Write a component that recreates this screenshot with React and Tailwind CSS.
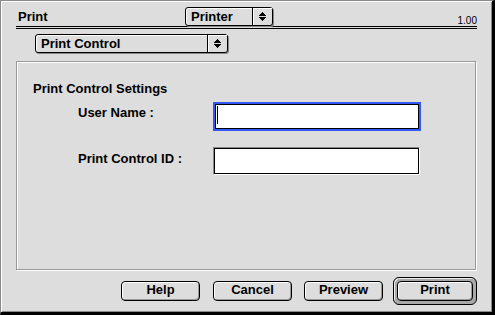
import React from "react";

const Arrows = () => (
  <svg width="7" height="9" viewBox="0 0 7 9" shapeRendering="crispEdges">
    <rect x="3" y="0" width="1" height="1" fill="#000" />
    <rect x="2" y="1" width="3" height="1" fill="#000" />
    <rect x="1" y="2" width="5" height="1" fill="#000" />
    <rect x="0" y="3" width="7" height="1" fill="#000" />
    <rect x="0" y="5" width="7" height="1" fill="#000" />
    <rect x="1" y="6" width="5" height="1" fill="#000" />
    <rect x="2" y="7" width="3" height="1" fill="#000" />
    <rect x="3" y="8" width="1" height="1" fill="#000" />
  </svg>
);

function Popup({ label, className }) {
  return (
    <div
      className={
        "flex h-[19px] rounded-[3px] border border-black bg-[#dddddd] shadow-[inset_1px_1px_0_#fff,1px_1px_0_#888] " +
        className
      }
    >
      <div className="flex-1 pl-[5px] text-[13px] font-bold leading-[17px]">{label}</div>
      <div className="flex w-[20px] items-center justify-center border-l border-black shadow-[inset_1px_1px_0_#fff]">
        <Arrows />
      </div>
    </div>
  );
}

function Button({ label, className = "" }) {
  return (
    <div
      className={
        "flex h-[20px] justify-center rounded-[4px] border border-black bg-[#dddddd] text-[13px] font-bold leading-[16px] shadow-[inset_1px_1px_0_#fff,inset_-1px_-1px_0_#999] " +
        className
      }
    >
      {label}
    </div>
  );
}

export default function App() {
  return (
    <div className="h-[315px] w-[495px] border-t border-l border-r-[3px] border-b-[3px] border-t-[#8a8a8a] border-l-[#8a8a8a] border-r-black border-b-black bg-[#dddddd] font-['Liberation_Sans',Arial,sans-serif] text-black shadow-[inset_1px_1px_0_#fff,inset_-1px_-1px_0_#8a8a8a]">
      {/* header */}
      <div className="ml-[15px] flex w-[461px] border-b-[3px] border-double border-black pt-[6px]">
        <div className="w-[169px] pl-[2px] text-[13px] font-bold leading-[19px]">Print</div>
        <Popup label="Printer" className="w-[88px]" />
        <div className="flex-1" />
        <div className="self-end text-[10px] leading-[10px]">1.00</div>
      </div>

      <Popup label="Print Control" className="ml-[34px] mt-[5px] w-[193px]" />

      {/* settings panel */}
      <div className="ml-[15px] mt-[8px] h-[209px] w-[460px] border border-[#999] pt-[19px] shadow-[inset_1px_1px_0_#fff,1px_1px_0_#fff]">
        <div className="pl-[16px] text-[13px] font-bold leading-[15px]">Print Control Settings</div>
        <div className="mt-[6px] grid grid-cols-[196px_auto] items-start">
          <div className="mt-[3px] pl-[61px] text-[13px] font-bold leading-[15px]">User Name :</div>
          <div className="h-[29px] w-[208px] border-2 border-[#3358f5]">
            <div className="flex h-full items-start border border-black bg-white pl-[1px] pt-[1px]">
              <div className="h-[18px] w-px bg-black" />
            </div>
          </div>

          <div className="mt-[20px] pl-[61px] text-[13px] font-bold leading-[15px]">Print Control ID :</div>
          <div className="mt-[16px] h-[28px] w-[207px] border border-t-[#888] border-l-[#888] border-r-white border-b-white">
            <div className="h-full border border-black bg-white" />
          </div>
        </div>
      </div>

      {/* buttons */}
      <div className="mt-[7px] flex items-center">
        <Button label="Help" className="ml-[120px] w-[79px]" />
        <Button label="Cancel" className="ml-[13px] w-[79px]" />
        <Button label="Preview" className="ml-[12px] w-[79px]" />
        <div className="ml-[10px] rounded-[6px] border border-black bg-[#a8a8a8] p-[3px] shadow-[inset_1px_1px_0_#eee]">
          <Button label="Print" className="w-[76px]" />
        </div>
      </div>
    </div>
  );
}
